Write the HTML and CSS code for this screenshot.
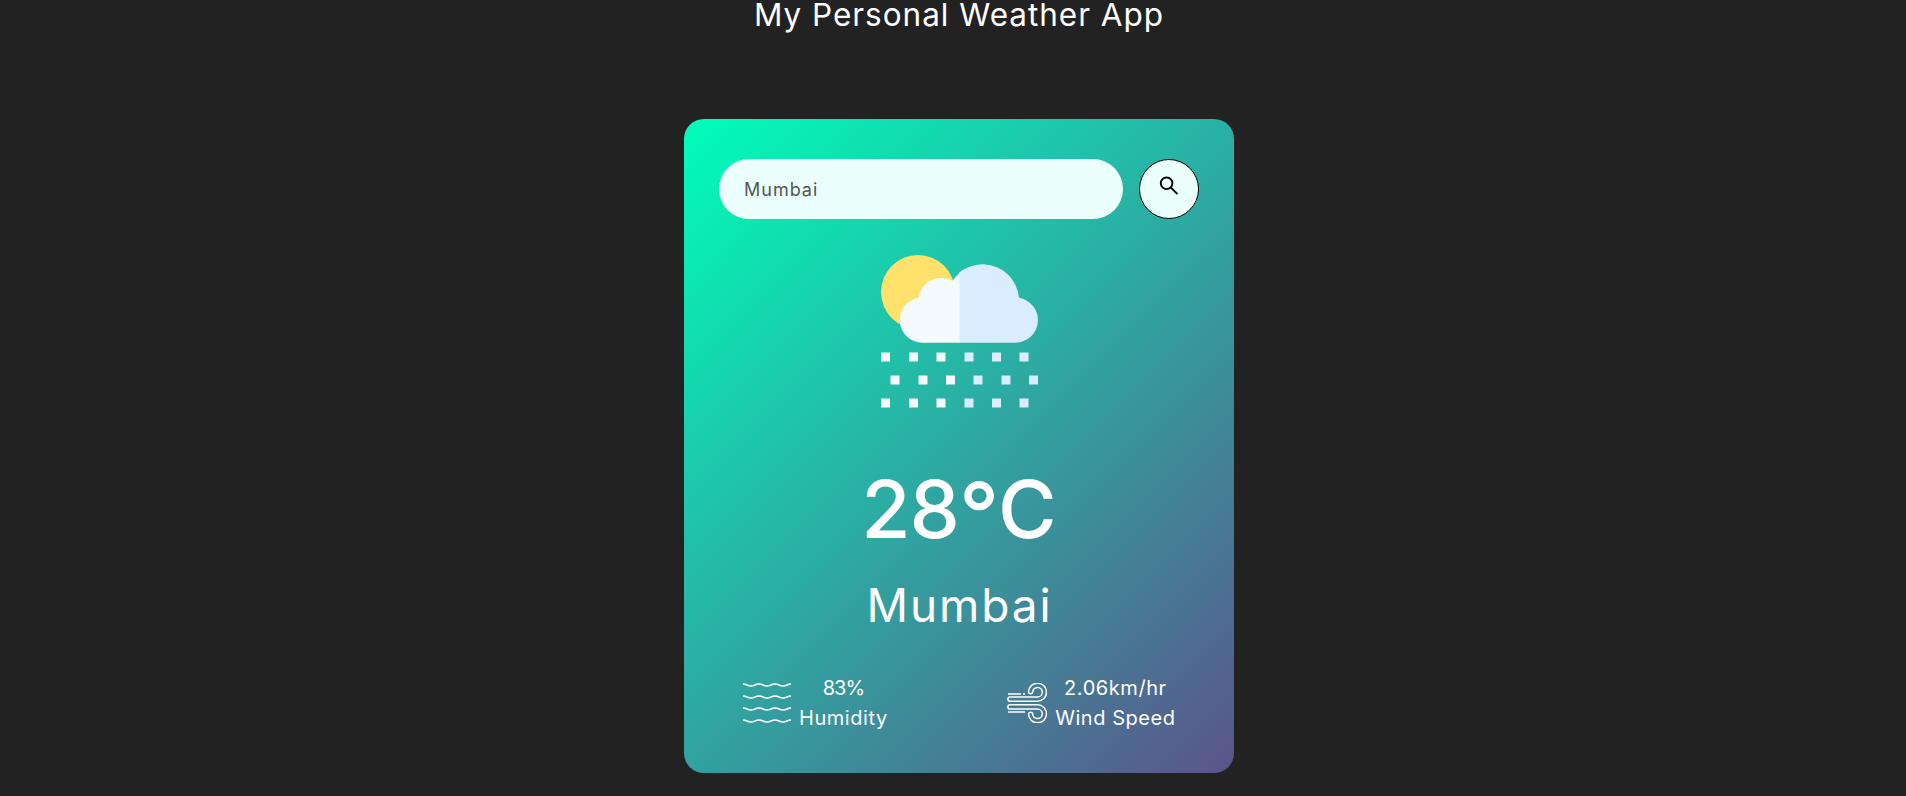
FILE: index.html
```html
<!DOCTYPE html>
<html lang="en">
<head>
<meta charset="utf-8">
<title>My Personal Weather App</title>
<link rel="stylesheet" href="styles.css">
</head>
<body>
<h1 class="title">My Personal Weather App</h1>
<main class="card">
  <form class="search">
    <input class="search-input" type="text" value="Mumbai" aria-label="City">
    <button class="search-button" type="button" aria-label="Search">
      <svg class="search-icon" width="20" height="20" viewBox="0 0 20 20" fill="none" stroke="#000" stroke-width="1.900"><circle cx="7.600" cy="7.300" r="5.800"/><path d="M11.800 11.500 18.500 18.200"/></svg>
    </button>
  </form>
  <svg class="weather-icon" width="170" height="170" viewBox="0 0 170 170">
    <circle cx="44" cy="44" r="37" fill="#ffe16b"/>
    <path fill="#f5faff" d="M86 94.700H48A22.600 22.600 0 0 1 44.700 49.800A22.600 22.600 0 0 1 78.500 33Q81.500 28.500 86 24.500Z"/>
    <path fill="#daecff" d="M85.500 94.700V24.300A36.800 36.800 0 0 1 145 49.800A22.600 22.600 0 0 1 141.500 94.700Z"/>
    <path fill="#f5faff" d="M7 104.500h9v9h-9zm28 0h9v9h-9zm27.500 0h9v9h-9zM16.500 127.500h9v9h-9zm28 0h9v9h-9zm27.500 0h9v9h-9zM7 150.500h9v9h-9zm28 0h9v9h-9zm27.500 0h9v9h-9z"/>
    <path fill="#daecff" d="M90.500 104.500h9v9h-9zm27.500 0h9v9h-9zm27.500 0h9v9h-9zM99.500 127.500h9v9h-9zm28 0h9v9h-9zm27.500 0h9v9h-9zM90.500 150.500h9v9h-9zm27.500 0h9v9h-9zm27.500 0h9v9h-9z"/>
  </svg>
  <div class="temp">28<span class="degree">°</span>C</div>
  <div class="city">Mumbai</div>
  <div class="details">
    <div class="detail">
      <svg width="48" height="40" viewBox="0 0 48 40" fill="none" stroke="#fff" stroke-width="1.400"><path d="M0 1Q2 1 4 2T8 3T12 2T16 1T20 2T24 3T28 2T32 1T36 2T40 3T44 2T48 1M0 13Q2 13 4 14T8 15T12 14T16 13T20 14T24 15T28 14T32 13T36 14T40 15T44 14T48 13M0 25Q2 25 4 26T8 27T12 26T16 25T20 26T24 27T28 26T32 25T36 26T40 27T44 26T48 25M0 37Q2 37 4 38T8 39T12 38T16 37T20 38T24 39T28 38T32 37T36 38T40 39T44 38T48 37"/></svg>
      <div class="labels"><div class="humidity-value">83%</div><div class="humidity-label">Humidity</div></div>
    </div>
    <div class="detail">
      <svg width="40" height="40" viewBox="0 0 40 40" fill="none" stroke="#fff" stroke-width="1.500"><path d="M1 11H14M16 11H18M1 29H18M3 14H30.500A4.800 4.800 0 1 0 25.700 9.200A2.200 2.200 0 0 1 21.500 9.200A9 9 0 1 1 30.500 18.200H3A2.100 2.100 0 0 1 3 14M3 26H30.500A4.800 4.800 0 1 1 25.700 30.800A2.200 2.200 0 0 0 21.500 30.800A9 9 0 1 0 30.500 21.800H3A2.100 2.100 0 0 0 3 26"/></svg>
      <div class="labels"><div class="wind-value">2.06km/hr</div><div class="wind-label">Wind Speed</div></div>
    </div>
  </div>
</main>
</body>
</html>
```
FILE: styles.css
```css
* { box-sizing: border-box; margin: 0; padding: 0; }
html { overflow: hidden; background: #222; }
body { width: 1918px; height: 796px; overflow: hidden; background: #222; color: #fff; font-family: Inter, sans-serif; display: flex; flex-direction: column; align-items: center; }
.title { height: 119px; line-height: 30px; font-size: 31.500px; font-weight: 400; letter-spacing: 0.970px; white-space: nowrap; }
.card { width: 550px; height: 654px; padding: 40px 35px; border-radius: 20px; background: linear-gradient(135deg, #00feba, #5b548a); display: flex; flex-direction: column; align-items: center; }
.search { display: flex; gap: 16px; width: 100%; height: 60px; }
.search-input { flex: 1; min-width: 0; border: 0; outline: 0; border-radius: 30px; padding: 0 25px; background: #ebfffc; color: #555; font: 400 18px Inter, sans-serif; letter-spacing: 1px; }
.search-button { width: 60px; height: 60px; border: 1px solid #000; border-radius: 50%; background: #ebfffc; padding: 16px 0 0 19px; display: flex; }
.weather-icon { margin-top: 29px; flex: none; }
.temp { margin-top: 31px; height: 105px; line-height: 120px; font-size: 80px; font-weight: 500; letter-spacing: -1px; margin-right: 1px; white-space: nowrap; }
.degree { font-size: 88px; line-height: 0; vertical-align: -7px; }
.city { height: 68px; line-height: 68px; font-size: 46px; letter-spacing: 1.900px; margin-right: -1px; white-space: nowrap; margin-top: 17px; }
.details { width: 100%; display: flex; justify-content: space-between; padding: 0 24px; margin-top: 34px; }
.detail { display: flex; gap: 8px; align-items: center; }
.labels { text-align: center; font-size: 20px; line-height: 30px; letter-spacing: 0.550px; margin-right: -0.550px; white-space: nowrap; }
.humidity-value { letter-spacing: -1px; }
```
